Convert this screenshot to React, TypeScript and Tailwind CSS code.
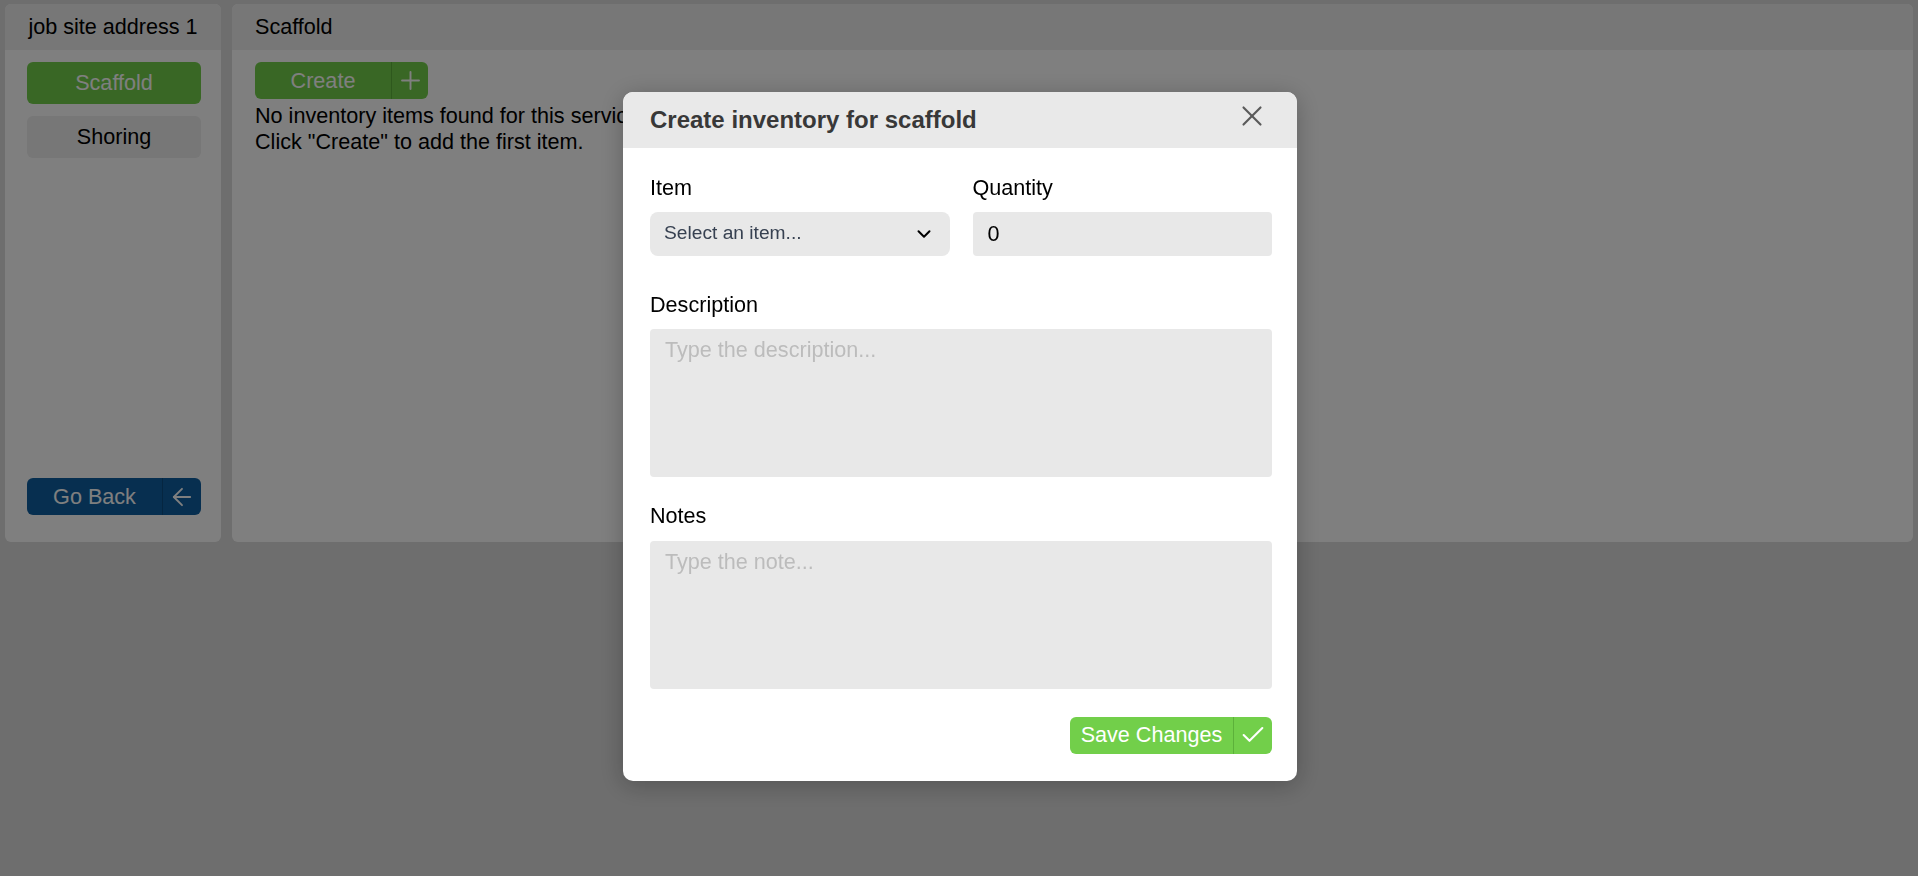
import { ArrowLeft, Check, ChevronDown, Plus, X } from 'lucide-react'

// Shared green used by the service tabs and action buttons
const GREEN = 'bg-[#72cf4a]'

function SplitButton({
  label,
  icon,
  textWidth,
  iconWidth,
  color,
  divider,
}: {
  label: string
  icon: React.ReactNode
  textWidth: string
  iconWidth: string
  color: string
  divider: string
}) {
  return (
    <button className={`flex h-[37px] items-stretch rounded-[6px] text-white ${color}`}>
      <span className={`flex items-center justify-center text-[21.6px] leading-[24px] ${textWidth}`}>{label}</span>
      <span className={`flex items-center justify-center border-l ${divider} ${iconWidth}`}>{icon}</span>
    </button>
  )
}

function Sidebar() {
  return (
    <aside className="flex h-[538px] w-[216px] shrink-0 flex-col overflow-hidden rounded-[6px] bg-white">
      <div className="flex h-[46px] items-center justify-center bg-[#eeeeee] text-[21.6px] text-black">
        job site address 1
      </div>
      <div className="flex flex-1 flex-col justify-between pb-[27px] pl-[22px] pr-[20px] pt-[12px]">
        <div className="flex flex-col gap-[12px]">
          <button className={`h-[42px] rounded-[6px] text-[21.6px] text-white ${GREEN}`}>Scaffold</button>
          <button className="h-[42px] rounded-[6px] bg-[#eeeeee] text-[21.6px] text-black">Shoring</button>
        </div>
        <SplitButton
          label="Go Back"
          icon={<ArrowLeft size={28} strokeWidth={1.6} />}
          textWidth="w-[135px]"
          iconWidth="w-[39px]"
          color="bg-[#0f5fa0]"
          divider="border-[#0a4c82]"
        />
      </div>
    </aside>
  )
}

function ServicePanel() {
  return (
    <section className="flex h-[538px] flex-1 flex-col overflow-hidden rounded-[6px] bg-white">
      <div className="flex h-[46px] items-center bg-[#eeeeee] pl-[23px] text-[21.6px] text-black">Scaffold</div>
      <div className="flex flex-col items-start pl-[23px] pt-[12px]">
        <SplitButton
          label="Create"
          icon={<Plus size={29} strokeWidth={1.6} />}
          textWidth="w-[136px]"
          iconWidth="w-[37px]"
          color={GREEN}
          divider="border-[#5cb13a]"
        />
        <p className="mt-[4px] text-[21.6px] leading-[26px] text-black">
          No inventory items found for this service.
          <br />
          Click "Create" to add the first item.
        </p>
      </div>
    </section>
  )
}

function Field({ label, className = '', children }: { label: string; className?: string; children: React.ReactNode }) {
  return (
    <div className={`flex flex-col ${className}`}>
      <label className="text-[21.6px] leading-[24px] text-black">{label}</label>
      {children}
    </div>
  )
}

function CreateInventoryModal() {
  return (
    <div className="fixed inset-0 flex items-center justify-center bg-black/50">
      <div className="mb-[4px] ml-[2px] w-[674px] overflow-hidden rounded-[10px] bg-white shadow-[0_4px_24px_rgba(0,0,0,0.25)]">
        <div className="flex h-[56px] items-center justify-between bg-[#e9e9e9] pl-[27px] pr-[28px]">
          <h2 className="text-[24px] font-bold text-[#383838]">Create inventory for scaffold</h2>
          <X size={34} strokeWidth={1.5} className="-mt-[8px] text-[#5a5a5a]" />
        </div>

        <div className="flex flex-col pb-[27px] pl-[27px] pr-[25px] pt-[28px]">
          <div className="grid grid-cols-2 gap-x-[23px]">
            <Field label="Item">
              <div className="mt-[12px] flex h-[44px] items-center justify-between rounded-[8px] bg-[#e8e8e8] pl-[14px] pr-[15px]">
                <span className="text-[19.2px] text-[#374151]">Select an item...</span>
                <ChevronDown size={22} strokeWidth={2.2} className="text-black" />
              </div>
            </Field>
            <Field label="Quantity">
              <input
                defaultValue="0"
                className="mt-[12px] h-[44px] rounded-[4px] bg-[#e8e8e8] pl-[15px] text-[21.6px] text-black outline-none"
              />
            </Field>
          </div>

          <Field label="Description" className="mt-[37px]">
            <textarea
              placeholder="Type the description..."
              className="mt-[12px] h-[148px] resize-none rounded-[4px] bg-[#e8e8e8] pl-[15px] pt-[9px] text-[21.6px] leading-[24px] outline-none placeholder:text-[#bcbcbc]"
            />
          </Field>

          <Field label="Notes" className="mt-[27px]">
            <textarea
              placeholder="Type the note..."
              className="mt-[13px] h-[148px] resize-none rounded-[4px] bg-[#e8e8e8] pl-[15px] pt-[9px] text-[21.6px] leading-[24px] outline-none placeholder:text-[#bcbcbc]"
            />
          </Field>

          <div className="mt-[28px] flex justify-end">
            <SplitButton
              label="Save Changes"
              icon={<Check size={28} strokeWidth={1.8} />}
              textWidth="w-[163px]"
              iconWidth="w-[39px]"
              color={GREEN}
              divider="border-[#5cb13a]"
            />
          </div>
        </div>
      </div>
    </div>
  )
}

export default function App() {
  return (
    <div className="relative min-h-screen bg-[#dcdcdc] font-['Liberation_Sans',Arial,sans-serif]">
      <div className="flex gap-[11px] px-[5px] pt-[4px]">
        <Sidebar />
        <ServicePanel />
      </div>
      <CreateInventoryModal />
    </div>
  )
}
